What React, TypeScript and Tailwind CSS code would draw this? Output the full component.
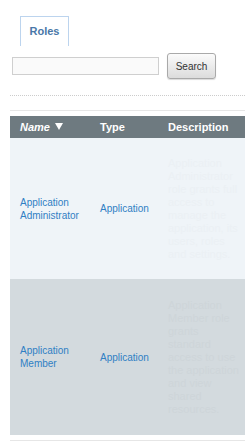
import React from "react";

const FAINT_A =
  "Application Administrator role grants full access to manage the application, its users, roles and settings.";
const FAINT_B =
  "Application Member role grants standard access to use the application and view shared resources.";

function SortDown() {
  return (
    <svg width="8" height="7" viewBox="0 0 8 7" className="inline-block ml-[5px] -mt-[2px]">
      <path d="M0 0h8L4 7z" fill="#ffffff" />
    </svg>
  );
}

function Row({ name, desc, h, bg, faint }: { name: string[]; desc: string; h: string; bg: string; faint: string }) {
  return (
    <div className={`flex items-center ${h} ${bg}`}>
      <div className="w-[90px] shrink-0 pl-[10px] leading-[13px] text-[10px] text-[#2f7fc4]">
        {name.map((n) => (
          <div key={n}>{n}</div>
        ))}
      </div>
      <div className="w-[68px] shrink-0 text-[10px] text-[#2f7fc4]">Application</div>
      <div className={`w-[76px] shrink-0 text-[11px] leading-[13px] ${faint}`}>{desc}</div>
    </div>
  );
}

export default function App() {
  return (
    <div className="w-[245px] h-[444px] overflow-hidden bg-white font-['Liberation_Sans',Arial,sans-serif]">
      <div className="pt-4 pl-5">
        <div className="w-[49px] h-[30px] border border-b-0 border-[#bcd4ee] flex items-center justify-center text-[11px] font-bold text-[#4a78a8]">
          Roles
        </div>
      </div>

      <div className="flex items-center gap-2 pl-3 mt-[7px] h-[26px]">
        <input className="w-[147px] h-[18px] border border-[#cfcfcf] bg-[#fafafa] outline-none" />
        <button className="w-[49px] h-[26px] rounded-[3px] border border-[#a9a9a9] bg-gradient-to-b from-[#fbfbfb] to-[#dcdcdc] text-[10px] text-[#333] shadow-[0_1px_1px_rgba(0,0,0,0.15)]">
          Search
        </button>
      </div>

      <div className="ml-[10px] mt-4 border-t border-dotted border-[#cccccc]" />
      <div className="ml-[10px] mt-[14px] border-t border-[#e6e6e6]" />

      <div className="ml-[10px] mt-[5px]">
        <div className="flex items-center h-[22px] bg-[#6e7a80] text-white text-[11px] font-bold">
          <div className="w-[90px] shrink-0 pl-[10px] italic">
            Name
            <SortDown />
          </div>
          <div className="w-[68px] shrink-0">Type</div>
          <div className="shrink-0 whitespace-nowrap">Description</div>
        </div>
        <Row
          name={["Application", "Administrator"]}
          desc={FAINT_A}
          h="h-[141px]"
          bg="bg-[#eff4f8]"
          faint="text-[#ebf0f4]"
        />
        <Row
          name={["Application", "Member"]}
          desc={FAINT_B}
          h="h-[156px]"
          bg="bg-[#d3dade]"
          faint="text-[#ced5d9]"
        />
        <div className="mt-[5px] border-t border-[#e6e6e6]" />
      </div>
    </div>
  );
}
